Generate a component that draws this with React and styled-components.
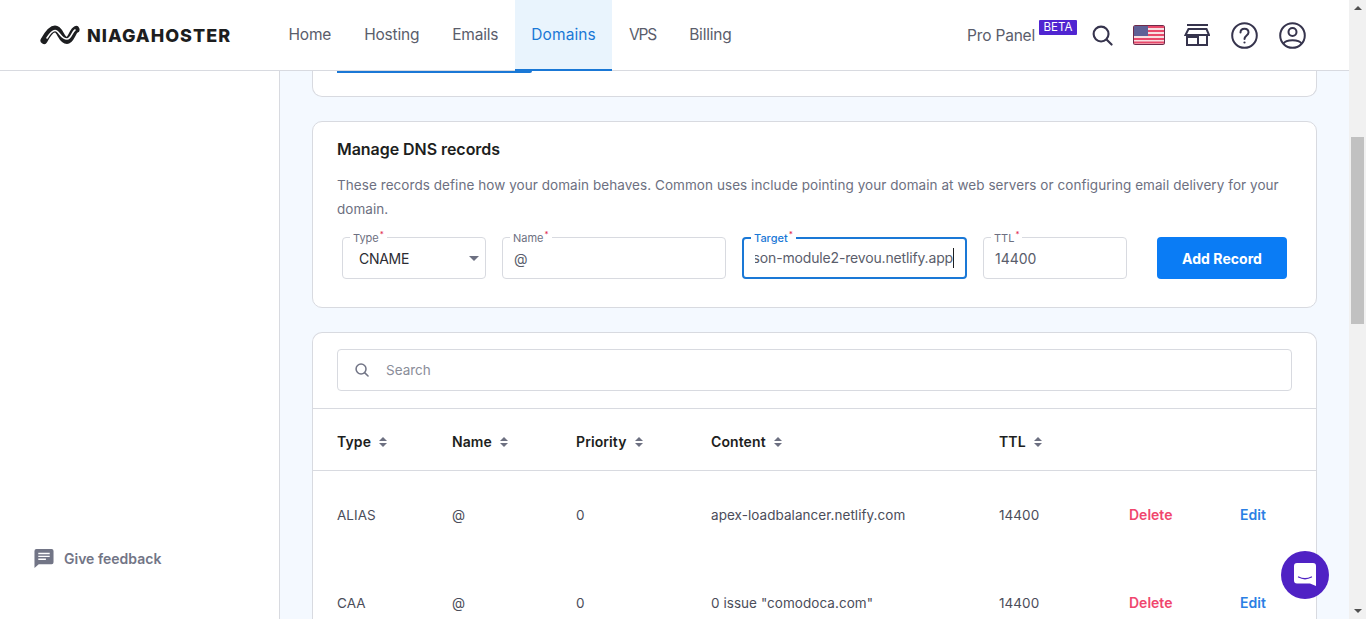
import React from "react";
import styled, { createGlobalStyle } from "styled-components";

const Global = createGlobalStyle`
  html, body { margin: 0; padding: 0; height: 100%; overflow: hidden; }
  body { font-family: Inter, "Noto Sans", sans-serif; color: #2f1c6a; }
  * { box-sizing: border-box; }
`;
const Shell = styled.div`position: relative; display: flex; width: 100%; height: 619px; overflow: hidden;`;
const Page = styled.div`flex: 1; min-width: 0; display: flex; flex-direction: column;`;
const Header = styled.header`
  height: 71px; flex: none; display: flex; align-items: stretch; background: #fff;
  border-bottom: 1px solid #d8dae0; padding-left: 40px; padding-right: 43px;
`;
const Logo = styled.div`display: flex; align-items: center; gap: 7px; width: 232px; flex: none;`;
const LogoText = styled.span`font-size: 18px; font-weight: 800; color: #1d1e20; letter-spacing: 1px; white-space: nowrap;`;
const Nav = styled.nav`display: flex; align-items: stretch; height: 71px;`;
const NavItem = styled.a`
  display: flex; align-items: center; padding: 0 16.5px 1px;
  font-size: 15.5px; white-space: nowrap; letter-spacing: ${p => p.$ls}px;
  color: ${p => (p.$active ? "#1a78d6" : "#5a5d6b")};
  background: ${p => (p.$active ? "#e9f4fd" : "transparent")};
  border-bottom: 2px solid ${p => (p.$active ? "#1a78d6" : "transparent")};
`;
const HeaderRight = styled.div`margin-left: auto; display: flex; align-items: center;`;
const ProPanel = styled.span`font-size: 15.5px; color: #5a5d6b; white-space: nowrap; letter-spacing: -0.2px;`;
const Beta = styled.span`
  align-self: flex-start; margin: 20px 15px 0 4px; height: 15px; width: 38px; background: #5025d1; color: #fff;
  font-size: 11.5px; line-height: 15px; text-align: center; border-radius: 1px;
`;
const IconBtn = styled.span`display: flex; align-items: center; justify-content: center; margin-left: ${p => p.$gap || 0}px;`;
const Body = styled.div`flex: 1; min-height: 0; display: flex;`;
const Sidebar = styled.aside`
  width: 280px; flex: none; background: #fff; border-right: 1px solid #d8dae0;
  display: flex; flex-direction: column; justify-content: flex-end; padding: 0 0 50px 34px;
`;
const Feedback = styled.div`display: flex; align-items: center; gap: 10px; color: #727586; font-size: 14px; font-weight: 600;`;
const Main = styled.main`flex: 1; min-width: 0; background: #f4f9ff; padding: 0 32px; display: flex; flex-direction: column; overflow: hidden;`;
const Card = styled.section`
  background: #fff; border: 1px solid #d8dae0; border-radius: 10px; flex: none;
`;
const ClippedCard = styled(Card)`
  height: 26px; border-top: none; border-radius: 0 0 10px 10px; margin-bottom: 24px; padding: 0 24px;
`;
const TabLine = styled.div`width: 195px; height: 2px; background: #1a78d6; border-radius: 0 0 4px 0;`;
const DnsCard = styled(Card)`height: 187px; padding: 17px 24px 0; margin-bottom: 24px;`;
const Title = styled.h2`margin: 0; font-size: 16px; line-height: 20px; font-weight: 600; color: #1d1e20; letter-spacing: -0.05px;`;
const Desc = styled.p`margin: 14px 0 0; font-size: 13.5px; line-height: 24px; color: #6d7081; letter-spacing: 0.06px;`;
const FormRow = styled.div`display: flex; gap: 16px; margin: 16px 0 0 5px;`;
const Field = styled.div`
  position: relative; width: ${p => p.$w}px; height: 42px; border-radius: 4px; background: #fff;
  border: ${p => (p.$focus ? "2px solid #1a78d6" : "1px solid #d8dae0")};
  display: flex; align-items: center; padding: 0 11px; overflow: visible;
`;
const Legend = styled.label`
  position: absolute; left: 7px; top: ${p => (p.$focus ? -7 : -6)}px; background: #fff; padding: 0 3px;
  font-size: 11px; line-height: 13px; white-space: nowrap; color: ${p => (p.$focus ? "#1a78d6" : "#6d7081")};
  font-weight: ${p => (p.$focus ? 500 : 400)};
  & > sup { color: #e0294f; font-size: 8px; line-height: 0; margin-left: 1px; }
`;
const Value = styled.span`font-size: 14px; color: ${p => p.$dark ? "#2b2c33" : "#5a5d6b"}; white-space: nowrap; padding-left: ${p => p.$pad || 0}px; letter-spacing: ${p => p.$ls || 0}px;`;
const Scroller = styled.div`flex: 1; min-width: 0; overflow: hidden; display: flex; justify-content: flex-end;`;
const CaretText = styled(Value)`border-right: 1px solid #1d1e20; line-height: 20px; flex: none;`;
const Arrow = styled.span`
  position: absolute; right: 6px; top: 18px; width: 0; height: 0;
  border-left: 5px solid transparent; border-right: 5px solid transparent; border-top: 5px solid #6d7081;
`;
const AddBtn = styled.button`
  margin-left: 14px; width: 130px; height: 42px; border: 0; border-radius: 4px; background: #0a7cf5; color: #fff;
  font: 700 14px Inter, sans-serif; letter-spacing: 0.05px;
`;
const TableCard = styled(Card)`border-bottom: none; border-radius: 10px 10px 0 0; padding-top: 16px; flex: 1;`;
const SearchWrap = styled.div`padding: 0 24px 17px; border-bottom: 1px solid #d8dae0;`;
const SearchBox = styled.div`
  height: 42px; border: 1px solid #d8dae0; border-radius: 4px; display: flex; align-items: center; gap: 17px; padding-left: 17px;
  font-size: 13.5px; color: #8a8d99;
`;
const cols = "115px 124px 135px 288px 130px 111px 1fr";
const HeadRow = styled.div`
  display: grid; grid-template-columns: ${cols}; align-items: center; height: 62px; padding: 4px 0 0 24px;
  border-bottom: 1px solid #d8dae0;
`;
const HeadCell = styled.div`display: flex; align-items: center; gap: 8px; font-size: 14px; font-weight: 600; color: #1d1e20; letter-spacing: 0.1px;`;
const Sort = styled.span`display: inline-flex; flex-direction: column; gap: 2px;
  &::before, &::after { content: ""; width: 0; height: 0; border-left: 4px solid transparent; border-right: 4px solid transparent; }
  &::before { border-bottom: 4px solid #6d7081; }
  &::after { border-top: 4px solid #6d7081; }
`;
const Row = styled.div`display: grid; grid-template-columns: ${cols}; align-items: center; height: 88px; padding-left: 24px;`;
const Cell = styled.div`font-size: 13.5px; color: #4b4d5a; white-space: nowrap; letter-spacing: 0.05px;`;
const Action = styled.a`font-size: 14px; font-weight: 600; line-height: 16px; margin-bottom: 1px; color: ${p => (p.$danger ? "#f0466e" : "#2a7fe4")};`;
const Scrollbar = styled.div`width: 17px; flex: none; background: #f1f1f1; display: flex; flex-direction: column; align-items: center; position: relative;`;
const ThumbArea = styled.div`flex: 1; width: 100%; padding: 127px 2px 0;`;
const Thumb = styled.div`height: 187px; background: #c1c1c1;`;
const ScrollArrow = styled.span`
  width: 0; height: 0; margin: ${p => (p.$up ? "6px 0 0" : "0 0 6px")};
  border-left: 4px solid transparent; border-right: 4px solid transparent;
  ${p => (p.$up ? "border-bottom: 4px solid #505050;" : "border-top: 4px solid #505050;")}
`;
const Chat = styled.div`
  position: absolute; left: 1281px; top: 551px; width: 48px; height: 48px; border-radius: 50%; background: #4f22c4;
  display: flex; align-items: center; justify-content: center;
`;

const ink = "#36344d";
const LogoMark = () => (
  <svg width="40" height="20" viewBox="0 0 40 20" fill="none">
    <path d="M4 15.500 C7 10 11 4 15 4 C20.500 4 21 15.500 27 15.500 C31 15.500 32.500 6 36 4.500" stroke="#1d1e20" strokeWidth="7" strokeLinecap="round" />
    <path d="M7 13 C9.500 9 12 5.500 15 5.500 C19.500 5.500 20.500 14 27 14 C31 14 32 7 35 5" stroke="#fff" strokeWidth="1.600" strokeLinecap="round" />
  </svg>
);
const SearchIcon = ({ size = 21, color = ink, w = 2.2 }) => (
  <svg width={size} height={size} viewBox="0 0 22 22" fill="none" stroke={color} strokeWidth={w} strokeLinecap="round">
    <circle cx="9.500" cy="9.500" r="7.800" /><path d="M15.500 15.500 L20.500 20.500" />
  </svg>
);
const Flag = () => (
  <svg width="32" height="20" viewBox="0 0 32 20">
    <rect width="32" height="20" rx="2.500" fill="#6e2a4a" />
    <rect x="1" y="1" width="30" height="18" rx="1.500" fill="#f7dfe2" />
    {[1, 5, 9, 13, 16.500].map(y => <rect key={y} x="1" y={y} width="30" height="2" fill="#e8486a" />)}
    <rect x="1" y="1" width="14" height="10" fill="#5f6096" />
  </svg>
);
const Store = () => (
  <svg width="26" height="26" viewBox="0 0 26 26" fill="none" stroke={ink} strokeWidth="2">
    <path d="M3 3 H24" /><path d="M4.500 7 H22.500 L25 13 H1.500 Z" /><path d="M3 13 V23 H23 V13" /><path d="M14 23 V15 H3" />
  </svg>
);
const Help = () => (
  <svg width="27" height="27" viewBox="0 0 27 27" fill="none" stroke={ink} strokeWidth="2">
    <circle cx="13.500" cy="13.500" r="12.300" />
    <path d="M9.500 10.500 C9.500 5.500 17.500 5.500 17.500 10.500 C17.500 13.500 13.500 13.500 13.500 17" strokeLinecap="round" />
    <circle cx="13.500" cy="20.500" r="1.100" fill={ink} stroke="none" />
  </svg>
);
const User = () => (
  <svg width="27" height="27" viewBox="0 0 27 27" fill="none" stroke={ink} strokeWidth="2">
    <circle cx="13.500" cy="13.500" r="12.300" /><circle cx="13.500" cy="10" r="4" />
    <path d="M4.500 21.500 C7 17 20 17 22.500 21.500" />
  </svg>
);
const FeedbackIcon = () => (
  <svg width="20" height="21" viewBox="0 0 21 21">
    <path d="M2.500 0.500 H18.500 Q20.500 0.500 20.500 2.500 V14.500 Q20.500 16.500 18.500 16.500 H5 L0.500 20.500 V2.500 Q0.500 0.500 2.500 0.500 Z" fill="#727586" />
    <path d="M4.500 4.500 H16.500 V6 H4.500 Z M4.500 7.500 H16.500 V9 H4.500 Z M4.500 10.500 H12.500 V12 H4.500 Z" fill="#fff" />
  </svg>
);
const ChatIcon = () => (
  <svg width="24" height="26" viewBox="0 0 24 26">
    <path d="M4 1 H20 Q23 1 23 4 V24 L17 21.500 H4 Q1 21.500 1 18.500 V4 Q1 1 4 1 Z" fill="#fff" />
    <path d="M5.500 15 Q12 18.500 18.500 15" stroke="#4f22c4" strokeWidth="1.300" fill="none" strokeLinecap="round" />
  </svg>
);

const navItems = [
  { label: "Home", ls: -0.2 },
  { label: "Hosting", ls: -0.2 },
  { label: "Emails", ls: -0.2 },
  { label: "Domains", ls: 0.1, active: true },
  { label: "VPS", ls: -1.1 },
  { label: "Billing", ls: -0.2 },
];
const heads = ["Type", "Name", "Priority", "Content", "TTL"];
const rows = [
  ["ALIAS", "@", "0", "apex-loadbalancer.netlify.com", "14400"],
  ["CAA", "@", "0", '0 issue "comodoca.com"', "14400"],
];

export default function App() {
  return (
    <Shell>
      <Global />
      <Page>
        <Header>
          <Logo><LogoMark /><LogoText>NIAGAHOSTER</LogoText></Logo>
          <Nav>{navItems.map(n => <NavItem key={n.label} $ls={n.ls} $active={n.active}>{n.label}</NavItem>)}</Nav>
          <HeaderRight>
            <ProPanel>Pro Panel</ProPanel>
            <Beta>BETA</Beta>
            <IconBtn><SearchIcon /></IconBtn>
            <IconBtn $gap={20}><Flag /></IconBtn>
            <IconBtn $gap={19}><Store /></IconBtn>
            <IconBtn $gap={21}><Help /></IconBtn>
            <IconBtn $gap={21}><User /></IconBtn>
          </HeaderRight>
        </Header>
        <Body>
          <Sidebar><Feedback><FeedbackIcon />Give feedback</Feedback></Sidebar>
          <Main>
            <ClippedCard><TabLine /></ClippedCard>
            <DnsCard>
              <Title>Manage DNS records</Title>
              <Desc>These records define how your domain behaves. Common uses include pointing your domain at web servers or configuring email delivery for your domain.</Desc>
              <FormRow>
                <Field $w={144}><Legend>Type<sup>*</sup></Legend><Value $dark $pad={5} $ls={-0.3}>CNAME</Value><Arrow /></Field>
                <Field $w={224}><Legend>Name<sup>*</sup></Legend><Value>@</Value></Field>
                <Field $w={225} $focus>
                  <Legend $focus>Target<sup>*</sup></Legend>
                  <Scroller><CaretText $ls={-0.16}>lesson-module2-revou.netlify.app</CaretText></Scroller>
                </Field>
                <Field $w={144}><Legend>TTL<sup>*</sup></Legend><Value>14400</Value></Field>
                <AddBtn>Add Record</AddBtn>
              </FormRow>
            </DnsCard>
            <TableCard>
              <SearchWrap><SearchBox><SearchIcon size={14} color="#727586" w={2.4} />Search</SearchBox></SearchWrap>
              <HeadRow>{heads.map(h => <HeadCell key={h}>{h}<Sort /></HeadCell>)}</HeadRow>
              {rows.map(r => (
                <Row key={r[0]}>
                  {r.map((c, i) => <Cell key={i}>{c}</Cell>)}
                  <Action $danger>Delete</Action>
                  <Action>Edit</Action>
                </Row>
              ))}
            </TableCard>
          </Main>
        </Body>
      </Page>
      <Scrollbar>
        <ScrollArrow $up />
        <ThumbArea><Thumb /></ThumbArea>
        <ScrollArrow />
      </Scrollbar>
      <Chat><ChatIcon /></Chat>
    </Shell>
  );
}
